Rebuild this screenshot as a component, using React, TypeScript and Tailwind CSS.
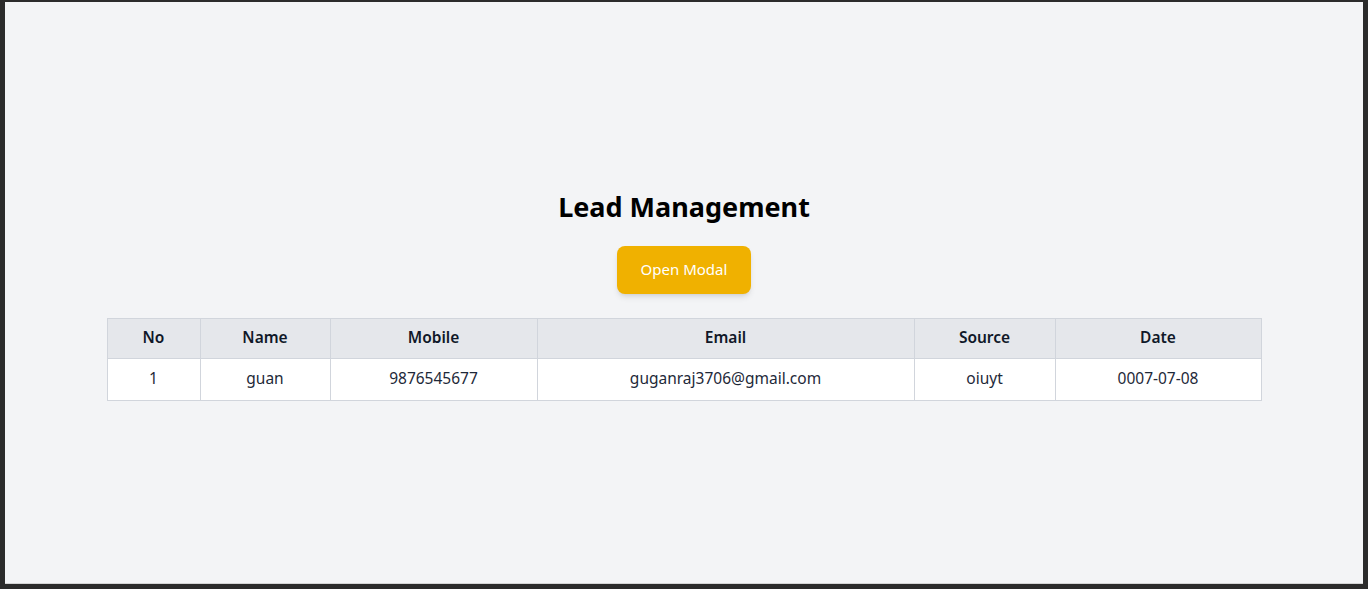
import React from 'react';

type Lead = {
  no: number;
  name: string;
  mobile: string;
  email: string;
  source: string;
  date: string;
};

const LEADS: Lead[] = [
  { no: 1, name: 'guan', mobile: '9876545677', email: 'guganraj3706@gmail.com', source: 'oiuyt', date: '0007-07-08' },
];

const COLS = [
  { label: 'No', w: 'w-[93px]' },
  { label: 'Name', w: 'w-[130px]' },
  { label: 'Mobile', w: 'w-[207px]' },
  { label: 'Email', w: 'w-[377px]' },
  { label: 'Source', w: 'w-[141px]' },
  { label: 'Date', w: 'w-[206px]' },
];

export default function App() {
  return (
    <div className="h-[589px] w-full bg-[#2b2b2b] pl-[5px] pr-[5px] pt-[2px] pb-[5px]" style={{ fontFamily: '"Noto Sans", sans-serif' }}>
      <div className="h-full w-full bg-gray-100 border-b border-[#d4d4d4] pt-2 flex flex-col items-center justify-center">
        <h1 className="text-[27px] font-bold text-black leading-none">Lead Management</h1>

        <button className="mt-[26px] w-[134px] h-12 rounded-lg bg-[#f0b100] text-white text-[15px] shadow-md">
          Open Modal
        </button>

        {/* Leads table */}
        <table className="mt-6 w-[85%] table-fixed border-collapse border border-gray-300 text-center text-[15.5px]">
          <thead>
            <tr className="bg-gray-200">
              {COLS.map(c => (
                <th key={c.label} className={`${c.w} h-10 border border-gray-300 font-semibold text-gray-900`}>{c.label}</th>
              ))}
            </tr>
          </thead>
          <tbody>
            {LEADS.map(l => (
              <tr key={l.no} className="bg-white">
                <td className="h-[42px] border border-gray-300 text-gray-800">{l.no}</td>
                <td className="border border-gray-300 text-gray-800">{l.name}</td>
                <td className="border border-gray-300 text-gray-800">{l.mobile}</td>
                <td className="border border-gray-300 text-gray-800">{l.email}</td>
                <td className="border border-gray-300 text-gray-800">{l.source}</td>
                <td className="border border-gray-300 text-gray-800">{l.date}</td>
              </tr>
            ))}
          </tbody>
        </table>
      </div>
    </div>
  );
}
